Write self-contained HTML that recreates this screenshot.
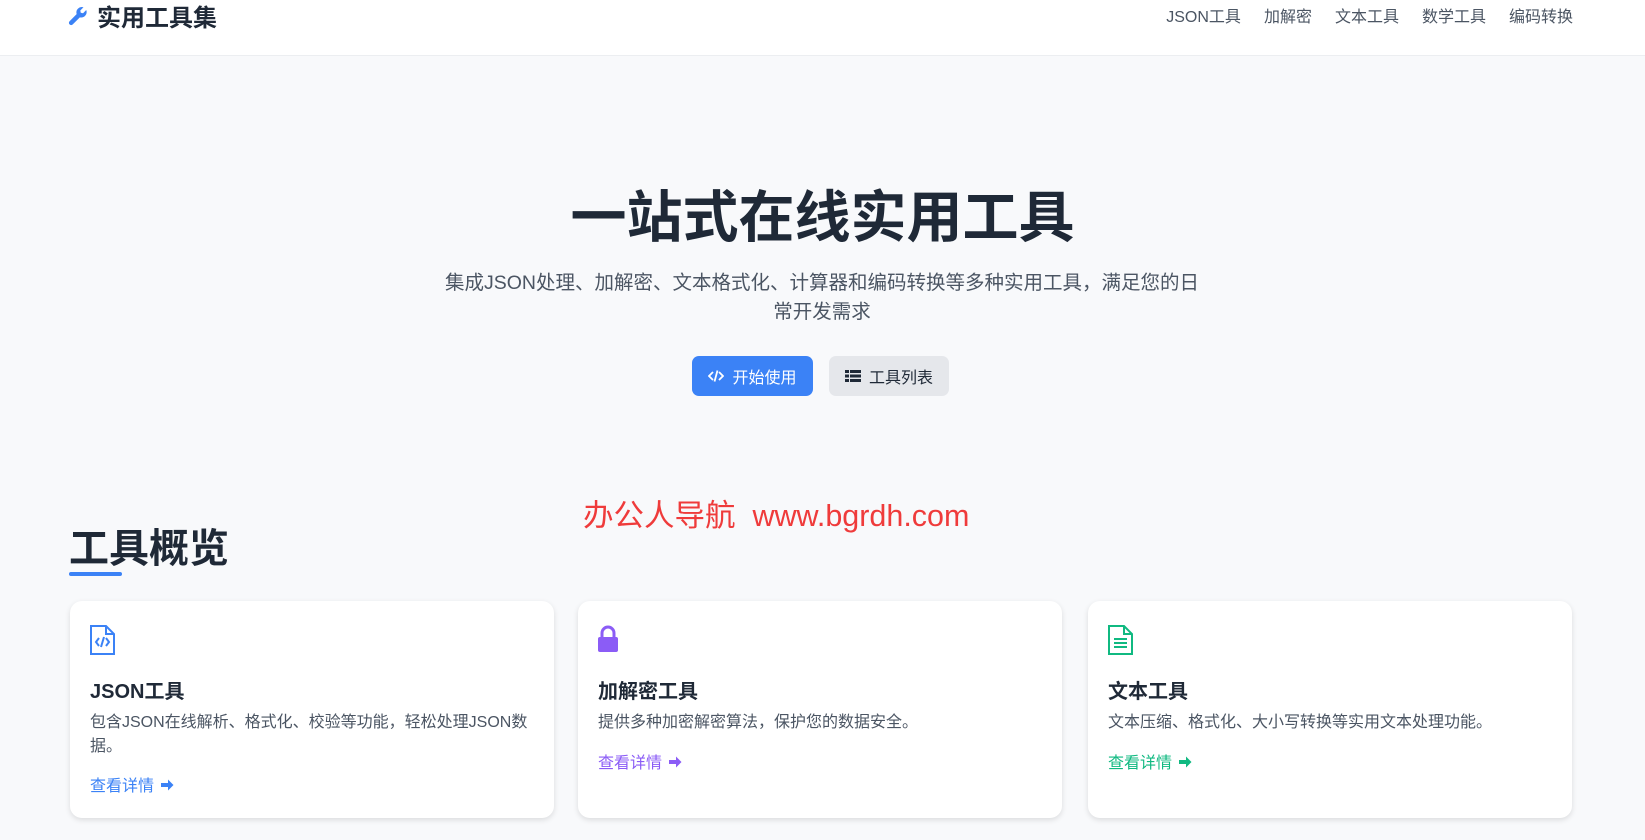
<!DOCTYPE html>
<html><head><meta charset="utf-8"><style>
*{margin:0;padding:0;box-sizing:border-box}
body{width:1645px;height:840px;overflow:hidden;background:#f8f9fb;font-family:"Liberation Sans","Noto Sans CJK SC",sans-serif;color:#1f2937;position:relative}
.hdr{position:absolute;left:0;top:0;width:1645px;height:56px;background:#fff;border-bottom:1px solid #eceef1}
.logo{position:absolute;left:67px;top:-2px;font-size:24px;font-weight:bold;display:flex;align-items:center;gap:8px;color:#1f2937}
.nav{position:absolute;right:72px;top:3px;display:flex;gap:23px;font-size:16px;color:#4b5563}
.h1{position:absolute;left:0;width:1645px;top:178px;text-align:center;font-size:56px;font-weight:bold;line-height:80px}
.sub{position:absolute;left:322px;width:1000px;top:269px;text-align:center;font-size:19.5px;line-height:29px;color:#4b5563}
.btn{position:absolute;top:356px;height:40px;border-radius:7px;display:flex;align-items:center;justify-content:center;gap:8px;font-size:16px}
.b1{left:692px;width:121px;background:#3b82f6;color:#fff}
.b2{left:829px;width:120px;background:#e5e7eb;color:#1f2937}
.wm{position:absolute;left:583px;top:491px;font-size:30.5px;color:#ef3b3b;white-space:nowrap}
.st{position:absolute;left:69px;top:522px;font-size:40px;font-weight:bold;line-height:54px}
.ul{position:absolute;left:69px;top:572px;width:53px;height:4px;background:#3b82f6;border-radius:2px}
.card{position:absolute;top:601px;width:484px;height:217px;background:#fff;border-radius:12px;box-shadow:0 2px 6px rgba(0,0,0,.12)}
.card svg{position:absolute;left:19px;top:24px}
.ct{position:absolute;left:20px;top:74px;font-size:20px;font-weight:bold}
.cd{position:absolute;left:20px;top:110px;font-size:16px;line-height:24px;color:#4b5563;white-space:nowrap}
.cl{position:absolute;left:20px;font-size:16px;white-space:nowrap}
.cl svg{position:static;display:inline-block;vertical-align:-1px;margin-left:6px}
</style></head><body>
<div class="hdr">
<div class="logo"><svg width="22" height="22" viewBox="0 0 24 24"><path d="M21 5.5l-3.5 3.5-2.5-.5-.5-2.5L18 2.5A6 6 0 0 0 10.5 10L2.8 17.7a2.3 2.3 0 0 0 3.5 3.5L14 13.5A6 6 0 0 0 21 5.5z" fill="#3b82f6"/></svg>实用工具集</div>
<div class="nav"><span>JSON工具</span><span>加解密</span><span>文本工具</span><span>数学工具</span><span>编码转换</span></div>
</div>
<div class="h1">一站式在线实用工具</div>
<div class="sub">集成JSON处理、加解密、文本格式化、计算器和编码转换等多种实用工具，满足您的日<br>常开发需求</div>
<div class="btn b1"><svg width="16" height="14" viewBox="0 0 16 14" fill="none" stroke="#fff" stroke-width="1.8"><path d="M5 3L1 7l4 4M11 3l4 4-4 4M9.5 1.5l-3 11"/></svg>开始使用</div>
<div class="btn b2"><svg width="16" height="14" viewBox="0 0 16 14" fill="#1f2937"><rect x="0" y="1" width="4" height="3"/><rect x="5" y="1" width="11" height="3"/><rect x="0" y="5.5" width="4" height="3"/><rect x="5" y="5.5" width="11" height="3"/><rect x="0" y="10" width="4" height="3"/><rect x="5" y="10" width="11" height="3"/></svg>工具列表</div>
<div class="wm">办公人导航&nbsp; www.bgrdh.com</div>
<div class="st">工具概览</div><div class="ul"></div>

<div class="card" style="left:70px">
<svg width="27" height="30" viewBox="0 0 27 30" fill="none" stroke="#3b82f6" stroke-width="2"><path d="M2 1h15l8 8v20H2z M17 1v8h8"/><path d="M10 13l-3 4 3 4M17 13l3 4-3 4M15 12l-3 10"/></svg>
<div class="ct">JSON工具</div>
<div class="cd">包含JSON在线解析、格式化、校验等功能，轻松处理JSON数<br>据。</div>
<div class="cl" style="top:171px;color:#3b82f6">查看详情<svg width="14" height="14" viewBox="0 0 14 14"><path d="M1 5h7V1.5l5.5 5.5L8 12.5V9H1z" fill="#3b82f6"/></svg></div>
</div>
<div class="card" style="left:578px">
<svg width="22" height="28" viewBox="0 0 22 28"><path d="M5 12V8a6 6 0 0 1 12 0v4" fill="none" stroke="#8b5cf6" stroke-width="3"/><rect x="1" y="12" width="20" height="15" rx="2" fill="#8b5cf6"/></svg>
<div class="ct">加解密工具</div>
<div class="cd">提供多种加密解密算法，保护您的数据安全。</div>
<div class="cl" style="top:148px;color:#8b5cf6">查看详情<svg width="14" height="14" viewBox="0 0 14 14"><path d="M1 5h7V1.5l5.5 5.5L8 12.5V9H1z" fill="#8b5cf6"/></svg></div>
</div>
<div class="card" style="left:1088px">
<svg width="27" height="30" viewBox="0 0 27 30" fill="none" stroke="#10b981" stroke-width="2"><path d="M2 1h15l8 8v20H2z M17 1v8h8"/><path d="M7 14h13M7 18h13M7 22h13"/></svg>
<div class="ct">文本工具</div>
<div class="cd">文本压缩、格式化、大小写转换等实用文本处理功能。</div>
<div class="cl" style="top:148px;color:#10b981">查看详情<svg width="14" height="14" viewBox="0 0 14 14"><path d="M1 5h7V1.5l5.5 5.5L8 12.5V9H1z" fill="#10b981"/></svg></div>
</div>
</body></html>
